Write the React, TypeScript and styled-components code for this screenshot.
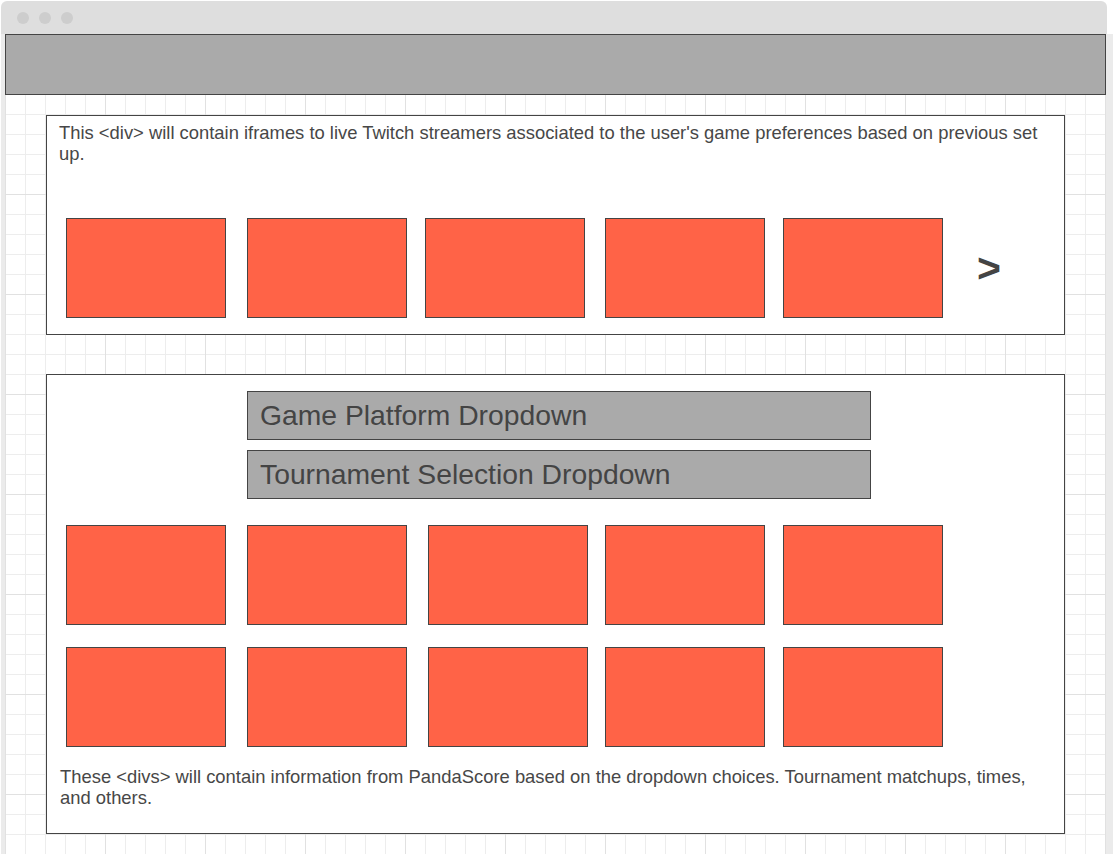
import React from "react";
import styled, { createGlobalStyle } from "styled-components";

const GlobalStyle = createGlobalStyle`
  html, body {
    margin: 0;
    padding: 0;
    background: #ffffff;
  }
  body {
    font-family: "Liberation Sans", Arial, sans-serif;
    color: #444444;
  }
  * { box-sizing: border-box; }
`;

const Page = styled.div`
  width: 1113px;
  height: 854px;
  overflow: hidden;
  padding: 1px 0 0 1px;
  display: flex;
  flex-direction: column;
`;

const TitleBar = styled.div`
  width: 1106px;
  height: 33px;
  flex: none;
  background: #dedede;
  border-radius: 6px 6px 0 0;
  display: flex;
  align-items: center;
  gap: 10px;
  padding-left: 16px;
`;

const Dot = styled.span`
  width: 12px;
  height: 12px;
  border-radius: 50%;
  background: #cdcdcd;
`;

const Body = styled.div`
  flex: 1;
  display: flex;
  min-height: 0;
`;

const SideRail = styled.div<{ $width: number }>`
  width: ${(p) => p.$width}px;
  flex: none;
  background: #ebebeb;
`;

const Canvas = styled.div`
  width: 1101px;
  flex: none;
  display: flex;
  flex-direction: column;
`;

const Header = styled.header`
  height: 61px;
  flex: none;
  background: #aaaaaa;
  border: 1px solid #444444;
`;

const GridArea = styled.main`
  flex: 1;
  padding: 20px 0 0 41px;
  background-color: #ffffff;
  background-image:
    linear-gradient(to right, #e1e1e1 1px, transparent 1px),
    linear-gradient(to bottom, #e1e1e1 1px, transparent 1px),
    linear-gradient(to right, #ededed 1px, transparent 1px),
    linear-gradient(to bottom, #ededed 1px, transparent 1px);
  background-size: 100px 100px, 100px 100px, 20px 20px, 20px 20px;
  background-position: 0 -1px, 0 -1px, 0 -1px, 0 -1px;
`;

const Card = styled.section<{ $height: number; $top: number }>`
  width: 1019px;
  height: ${(p) => p.$height}px;
  margin-top: ${(p) => p.$top}px;
  background: #ffffff;
  border: 1px solid #444444;
  display: flex;
  flex-direction: column;
`;

const Note = styled.p<{ $top: number; $left: number }>`
  margin: ${(p) => p.$top}px 12px 0 ${(p) => p.$left}px;
  font-size: 18.4px;
  line-height: 21px;
  color: #474747;
`;

const TileRow = styled.div<{ $top: number }>`
  display: flex;
  align-items: center;
  margin-top: ${(p) => p.$top}px;
`;

const Tile = styled.div<{ $left: number }>`
  width: 160px;
  height: 100px;
  flex: none;
  margin-left: ${(p) => p.$left}px;
  background: #ff6347;
  border: 1px solid #444444;
`;

const NextArrow = styled.span`
  margin-left: 34px;
  font-size: 41px;
  font-weight: 700;
  line-height: 1;
  color: #444444;
`;

const Dropdown = styled.div<{ $top: number }>`
  width: 624px;
  height: 49px;
  margin: ${(p) => p.$top}px 0 0 200px;
  background: #aaaaaa;
  border: 1px solid #444444;
  padding: 0 0 1px 12px;
  display: flex;
  align-items: center;
  font-size: 28.3px;
  color: #444444;
`;

// left offsets of each tile, measured from the previous element
const topRow = [19, 21, 18, 20, 18];
const bottomRow = [19, 21, 21, 17, 18];

export default function App() {
  return (
    <>
      <GlobalStyle />
      <Page>
        <TitleBar>
          <Dot />
          <Dot />
          <Dot />
        </TitleBar>
        <Body>
          <SideRail $width={4} />
          <Canvas>
            <Header />
            <GridArea>
              <Card $height={220} $top={0}>
                <Note $top={6} $left={12}>
                  This &lt;div&gt; will contain iframes to live Twitch streamers associated to the user's game
                  preferences based on previous set up.
                </Note>
                <TileRow $top={54}>
                  {topRow.map((l, i) => (
                    <Tile key={i} $left={l} />
                  ))}
                  <NextArrow>&gt;</NextArrow>
                </TileRow>
              </Card>
              <Card $height={460} $top={39}>
                <Dropdown $top={16}>Game Platform Dropdown</Dropdown>
                <Dropdown $top={10}>Tournament Selection Dropdown</Dropdown>
                <TileRow $top={26}>
                  {bottomRow.map((l, i) => (
                    <Tile key={i} $left={l} />
                  ))}
                </TileRow>
                <TileRow $top={22}>
                  {bottomRow.map((l, i) => (
                    <Tile key={i} $left={l} />
                  ))}
                </TileRow>
                <Note $top={19} $left={13}>
                  These &lt;divs&gt; will contain information from PandaScore based on the dropdown choices.
                  Tournament matchups, times, and others.
                </Note>
              </Card>
            </GridArea>
          </Canvas>
          <SideRail $width={7} />
        </Body>
      </Page>
    </>
  );
}
